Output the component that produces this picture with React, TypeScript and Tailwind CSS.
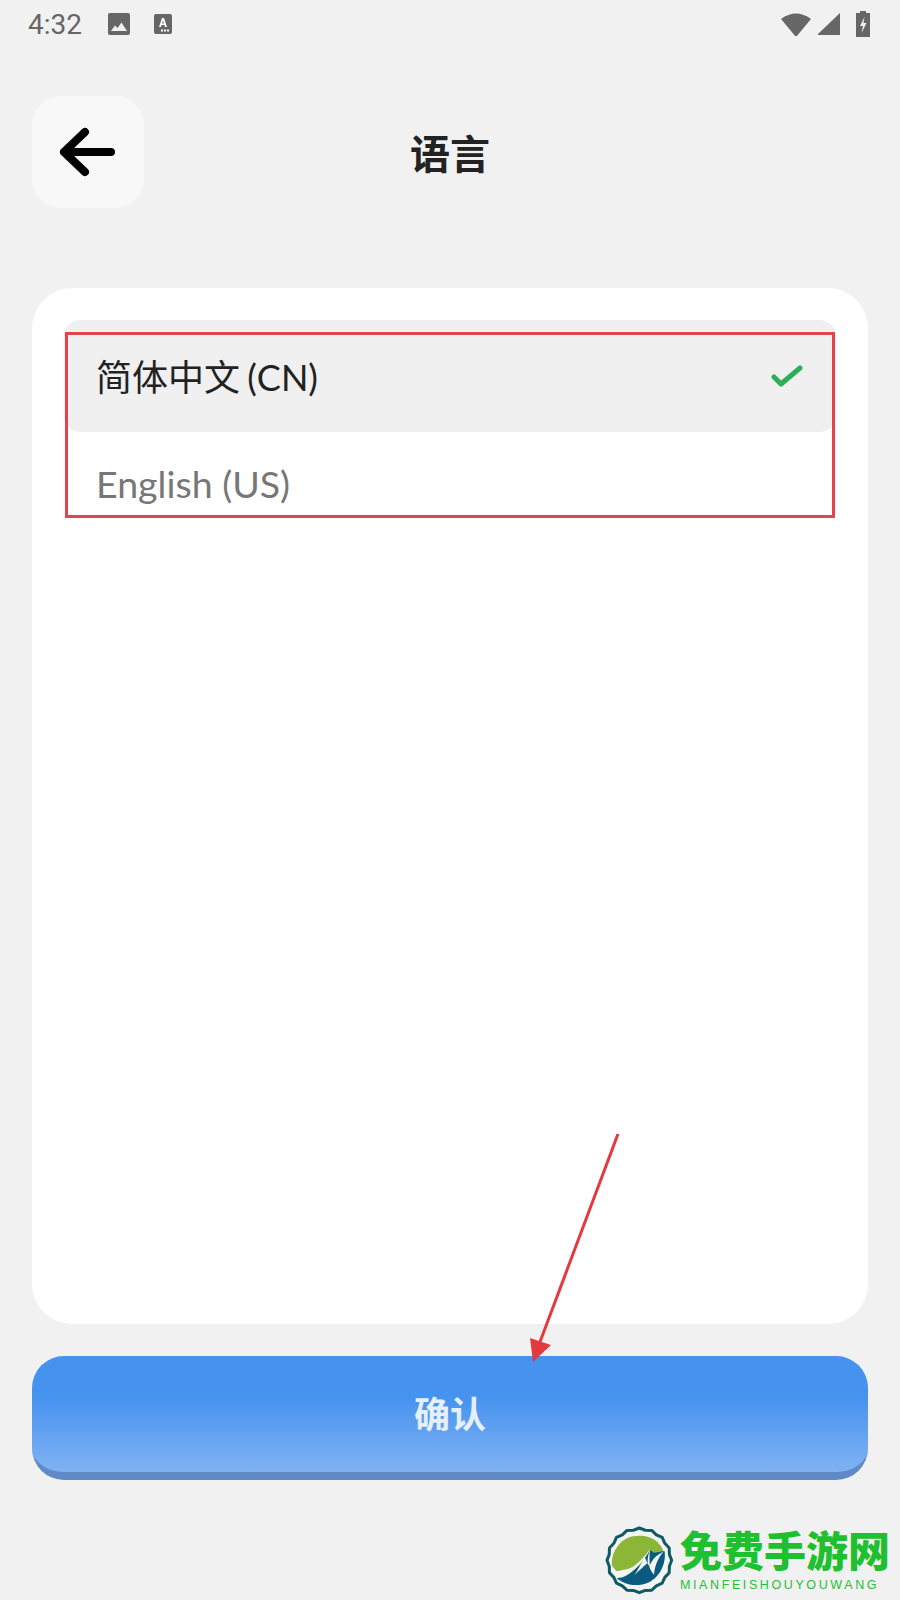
import React from "react";

const cjk = 'Lato,"Noto Sans CJK SC",sans-serif';

function StatusBar() {
  return (
    <div className="flex h-12 items-center justify-between pl-7 pr-[29px] text-[#666666]">
      <div className="flex items-center">
        <span className="w-[79px] pt-[2px] font-['Roboto',sans-serif] text-[28px] leading-[48px]">4:32</span>
        <svg width="24" height="24" viewBox="0 0 24 24" className="mr-[22px]">
          <rect x="1" y="1" width="22" height="22" rx="2" fill="#666666" />
          <path d="M4 19 L8 13.5 L10.5 16 L14.5 10.5 L20 19 Z" fill="#f1f1f2" />
        </svg>
        <svg width="20" height="22" viewBox="0 0 20 22">
          <rect x="1" y="1" width="18" height="20" rx="2" fill="#666666" />
          <path d="M6 14 L9 5 H11 L14 14 H12 L11.4 12 H8.6 L8 14 Z M9.1 10.4 H10.9 L10 7.6 Z" fill="#ffffff" fillRule="evenodd" />
          <path d="M11 16.5h2v2h-2zM14 16.5h2v2h-2zM8 16.5h2v2H8z" fill="#ffffff" />
        </svg>
      </div>
      <div className="flex items-center">
        <svg width="32" height="26" viewBox="0 0 32 26" className="mr-[5px]">
          <path d="M1 8 Q16 -3 31 8 L17.3 24.5 Q16 26 14.7 24.5 Z" fill="#666666" />
        </svg>
        <svg width="24" height="24" viewBox="0 0 24 24" className="mr-[14px]">
          <path d="M1 22 L23 1 V23 H2 Q0 23 1 22 Z" fill="#666666" />
        </svg>
        <svg width="16" height="28" viewBox="0 0 16 28">
          <path d="M5 1 H11 V3 H15 V27 H1 V3 H5 Z" fill="#666666" />
          <path d="M9.5 7 L5 16 H8 L6.5 23 L11.5 13 H8.5 Z" fill="#f1f1f2" />
        </svg>
      </div>
    </div>
  );
}

function Logo() {
  const pts: string[] = [];
  for (let i = 0; i < 32; i++) {
    const r = i % 2 === 0 ? 97 : 92;
    const a = (i / 32) * Math.PI * 2;
    pts.push(`${118 + r * Math.cos(a)},${115 + r * Math.sin(a)}`);
  }
  return (
    <svg width="80" height="76" viewBox="0 0 240 228" className="shrink-0">
      <polygon points={pts.join(" ")} fill="#f4f4f2" stroke="#0f5a63" strokeWidth="9" strokeLinejoin="round" />
      <path d="M50 168 C85 170 120 130 150 84 L194 88 C200 135 168 186 118 189 C90 191 68 184 50 168 Z" fill="#0b5a80" />
      <path d="M36 132 C32 100 50 64 82 48 C110 36 150 40 170 58 C180 68 188 78 190 88 L162 92 L150 84 C132 104 112 136 80 142 L50 148 Z" fill="#8cb638" />
      <path d="M40 146 C70 156 110 138 150 82 C130 122 95 160 58 164 C50 160 44 154 40 146 Z" fill="#f2f6ea" />
      <path d="M134 104 C124 124 114 142 104 158 C118 146 130 134 142 124 Z" fill="#f2f6ea" />
      <path d="M150 82 C144 100 142 114 143 126 L150 134 C148 116 148 100 150 82 Z" fill="#f2f6ea" />
      <path d="M148 134 C156 112 170 98 190 90 C174 108 164 132 162 158 C156 150 150 142 148 134 Z" fill="#f2f6ea" />
    </svg>
  );
}

export default function App() {
  return (
    <div className="relative h-[1600px] w-[900px] overflow-hidden bg-[#f1f1f2]" style={{ fontFamily: cjk }}>
      <StatusBar />

      <header className="relative mx-8 mt-12 flex h-28 items-center justify-center">
        <button className="absolute left-0 top-0 flex h-28 w-28 items-center justify-center rounded-[28px] bg-[#f8f8f8]">
          <svg width="60" height="50" viewBox="0 0 60 50">
            <path d="M6 25 H53 M27 5 L6 25 L27 45" fill="none" stroke="#000000" strokeWidth="8" strokeLinecap="round" strokeLinejoin="round" />
          </svg>
        </button>
        <h1 className="pt-1 text-[40px] font-bold leading-none text-[#222222]">语言</h1>
      </header>

      <main className="mx-8 mt-20 h-[1036px] rounded-[40px] bg-white p-8">
        <div className="flex h-28 items-center justify-between rounded-2xl bg-[#f0f0f1] pl-8 pr-[33px]">
          <span className="pt-[2px] text-[36px] leading-none text-[#222222] [word-spacing:-2px]">简体中文 (CN)</span>
          <svg width="34" height="26" viewBox="0 0 34 26">
            <path d="M5 14 L12 21 L31 5" fill="none" stroke="#2fae5a" strokeWidth="5" strokeLinecap="round" strokeLinejoin="round" />
          </svg>
        </div>
        <div className="flex h-[106px] items-center pb-[2px] pl-8">
          <span className="text-[37.5px] leading-none text-[#777777]">English (US)</span>
        </div>
      </main>

      <button className="mx-8 mt-8 flex h-[124px] w-[836px] items-center justify-center rounded-[32px] border-b-8 border-[#5f8ac6] bg-gradient-to-b from-[#4592ef] from-35% to-[#80b2f3] text-[36px] font-bold leading-none text-[#e4f0fd]">
        确认
      </button>

      <div className="absolute left-[65px] top-[332px] h-[186px] w-[770px] border-[3px] border-[#e2434c]" />

      <svg width="900" height="1600" viewBox="0 0 900 1600" className="pointer-events-none absolute left-0 top-0">
        <line x1="618" y1="1134" x2="540" y2="1342" stroke="#e33a3f" strokeWidth="3" />
        <polygon points="533,1362 530,1338 551,1345" fill="#e33a3f" />
      </svg>

      <div className="absolute left-[600px] top-[1522px] flex items-start gap-[0px]">
        <Logo />
        <div className="flex flex-col pt-[2px]">
          <span className="whitespace-nowrap font-['Noto_Sans_CJK_SC',sans-serif] text-[42px] font-black leading-[50px] text-[#1fc02f]">免费手游网</span>
          <span className="mt-[5px] whitespace-nowrap font-['Liberation_Sans',sans-serif] text-[12.5px] leading-[13px] tracking-[2.6px] text-[#1fc02f]">MIANFEISHOUYOUWANG</span>
        </div>
      </div>
    </div>
  );
}
